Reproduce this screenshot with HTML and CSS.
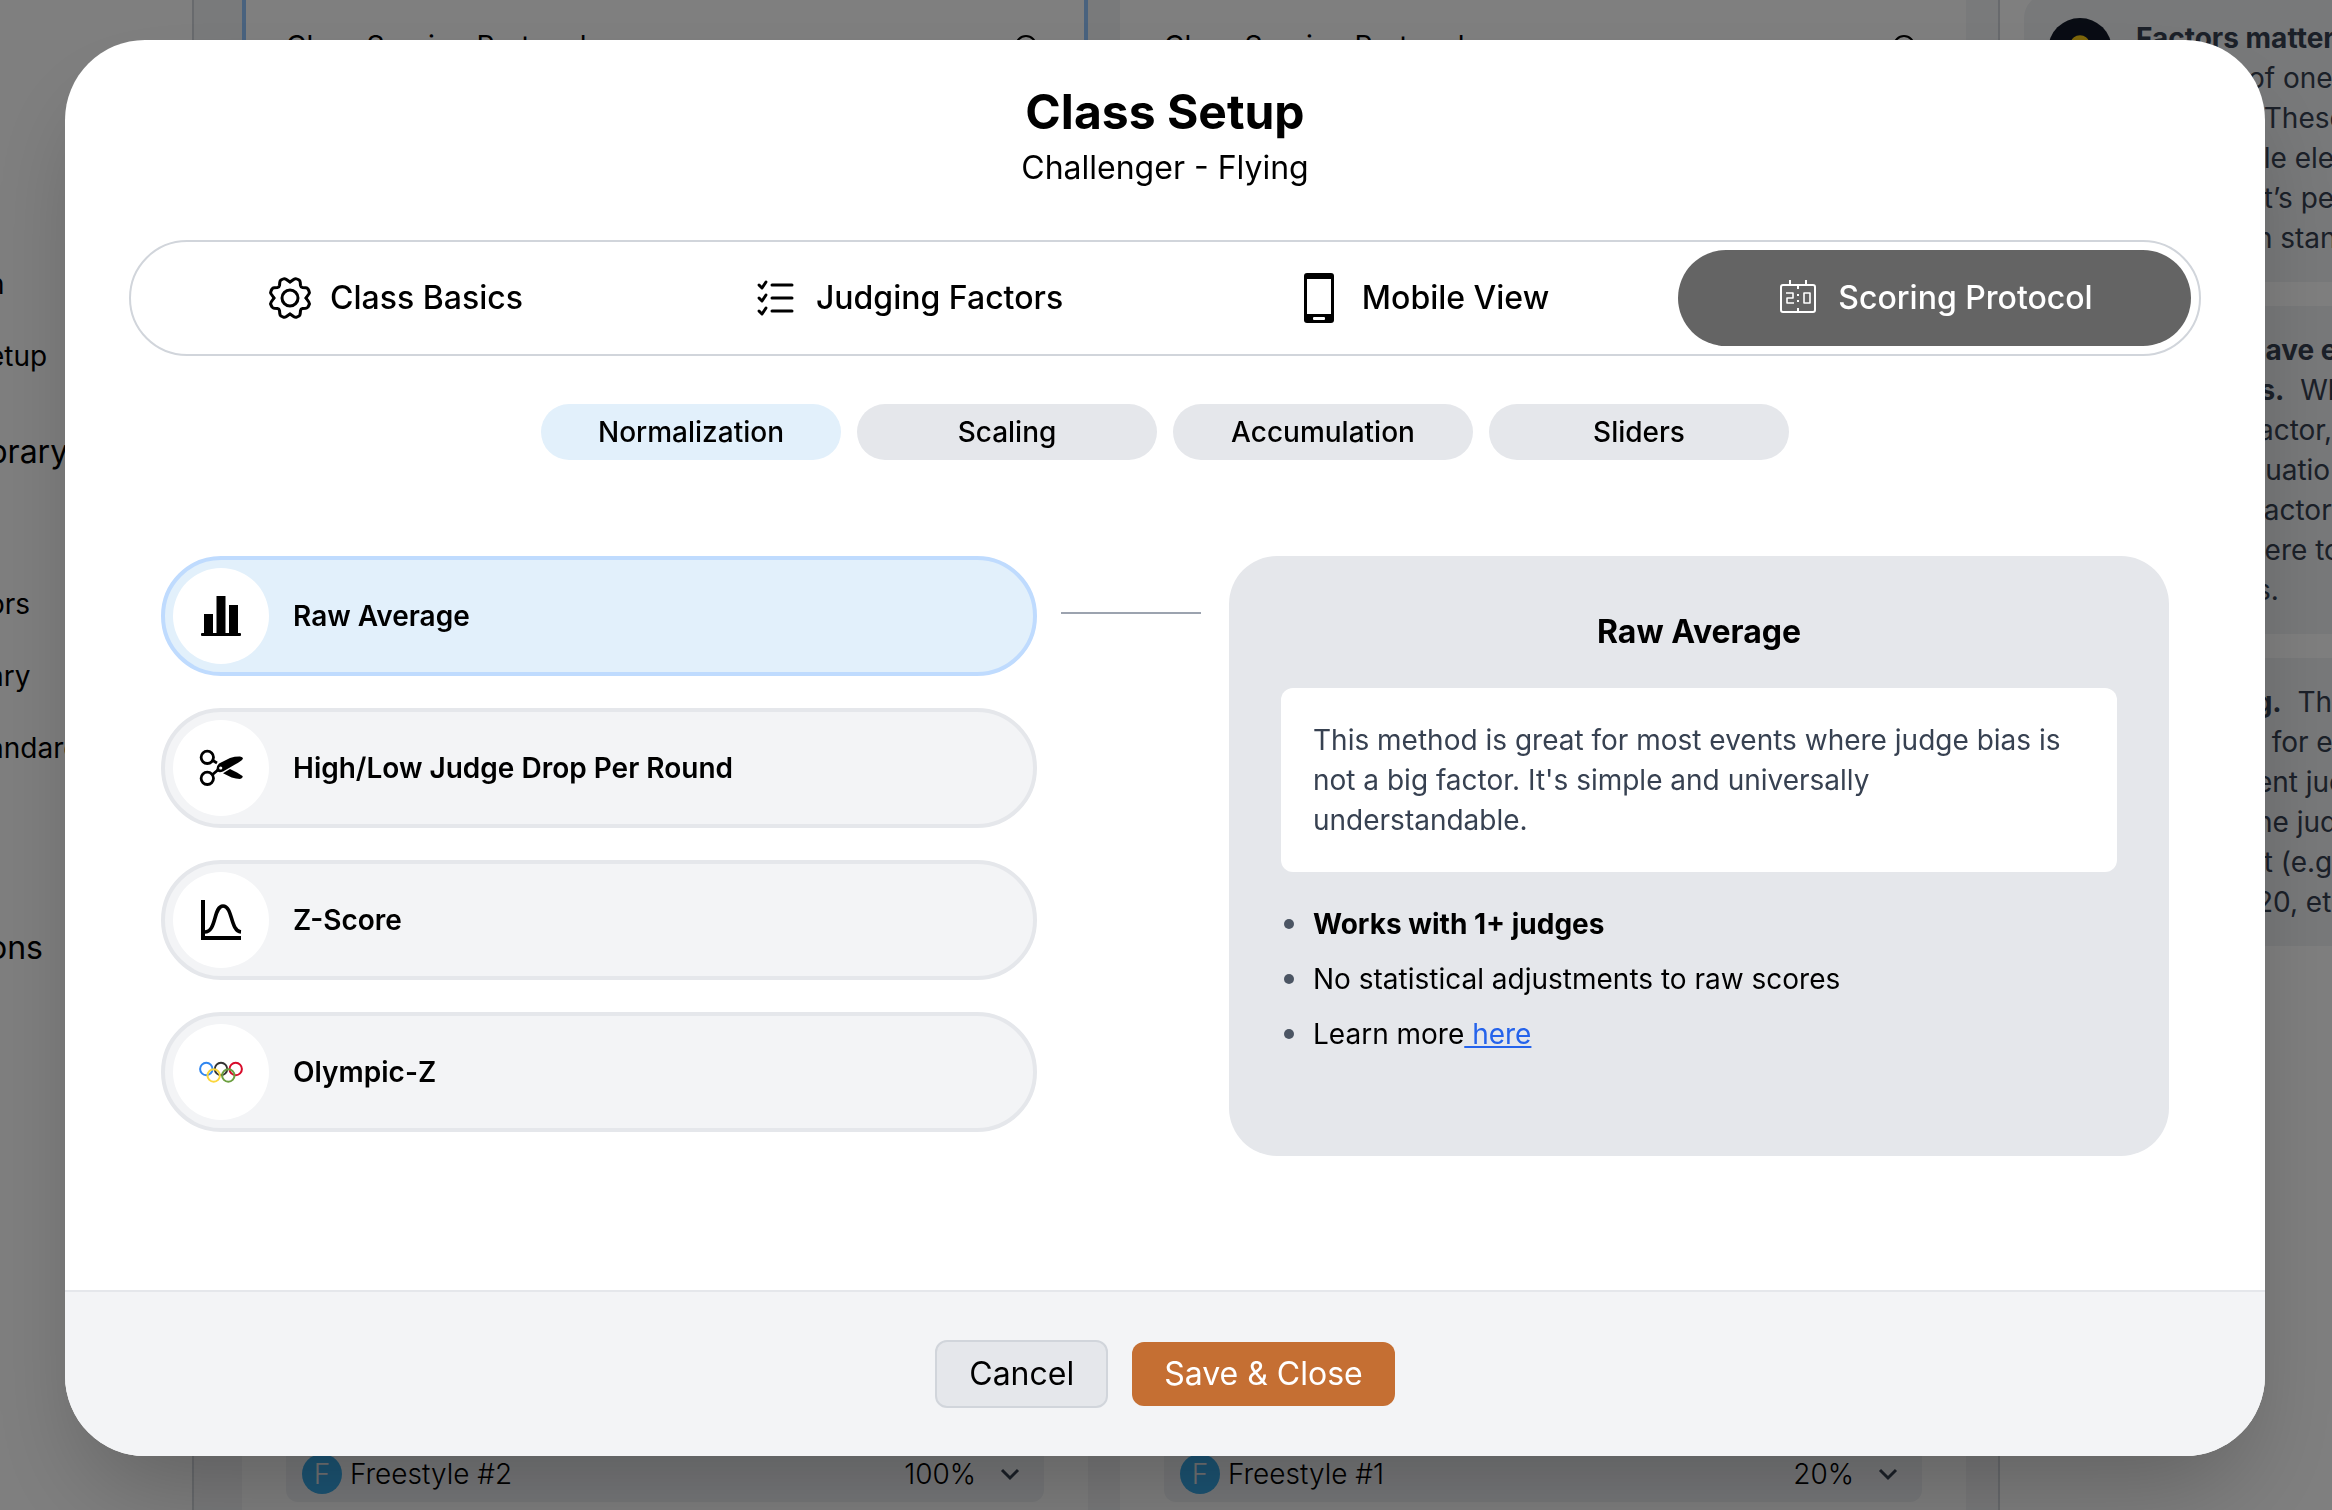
FILE: index.html
```html
<!DOCTYPE html>
<html lang="en">
<head>
  <meta charset="UTF-8">
  <meta name="viewport" content="width=device-width, initial-scale=1.0">
  <title>Class Setup</title>
  <link rel="stylesheet" href="styles.css">
</head>
<body>
  <!-- Page behind the dialog -->
  <div class="page" aria-hidden="true">
    <nav class="sidebar">
      <ul class="side-list">
        <li>n</li>
        <li>etup</li>
      </ul>
      <div class="side-heading">brary</div>
      <ul class="side-list">
        <li>ors</li>
        <li>ary</li>
        <li>andards</li>
      </ul>
      <div class="side-heading">ons</div>
    </nav>

    <main class="board">
      <section class="class-card selected">
        <div class="card-top">
          <span>Class Scoring Protocol</span>
          <svg class="info-icon" viewBox="0 0 24 24"><circle cx="12" cy="12" r="10" fill="none" stroke="#000" stroke-width="2" /></svg>
        </div>
        <div class="factor-row">
          <span class="badge">F</span>
          <span class="factor-name">Freestyle #2</span>
          <span>100%</span>
          <svg class="chevron" viewBox="0 0 24 24"><path d="M4 8l8 8 8-8" /></svg>
        </div>
      </section>
      <section class="class-card">
        <div class="card-top">
          <span>Class Scoring Protocol</span>
          <svg class="info-icon" viewBox="0 0 24 24"><circle cx="12" cy="12" r="10" fill="none" stroke="#000" stroke-width="2" /></svg>
        </div>
        <div class="factor-row">
          <span class="badge">F</span>
          <span class="factor-name">Freestyle #1</span>
          <span>20%</span>
          <svg class="chevron" viewBox="0 0 24 24"><path d="M4 8l8 8 8-8" /></svg>
        </div>
      </section>
    </main>

    <aside class="tips">
      <div class="tip">
        <span class="tip-icon">
          <svg viewBox="0 0 24 24"><path d="M12 1a8 8 0 0 0-5 14v3h10v-3a8 8 0 0 0-5-14zM8 20h8v3H8z" fill="#facc15" /></svg>
        </span>
        <div>
          <b>Factors matter</b>
          <div class="tip-lines">of one 
  These
  le ele
  t’s pe
 n stan</div>
        </div>
      </div>
      <div class="tip">
        <span class="tip-icon"></span>
        <div class="tip-lines"><b>have e
rs.</b>  Wh
factor,
quatio
  actor
here to
 s.</div>
      </div>
      <div class="tip">
        <span class="tip-icon"></span>
        <div class="tip-lines"><b> g.</b>  Th
   for e
 ent jud
 he jud
  t (e.g.
 20, etc</div>
      </div>
    </aside>
  </div>

  <!-- Dialog -->
  <div class="overlay">
    <div class="modal" role="dialog" aria-modal="true" aria-labelledby="modalTitle">
      <div class="modal-body">
        <header class="modal-header">
          <h1 id="modalTitle">Class Setup</h1>
          <p>Challenger - Flying</p>
        </header>

        <div class="tabs" role="tablist">
          <button class="tab" type="button" role="tab">
            <svg class="tab-icon" viewBox="-22 -22 44 44" fill="none" stroke="#000" stroke-width="3" stroke-linejoin="round" stroke-linecap="round">
              <path id="cog" d="M0-16L4-18.8Q5.5-19.8 7-19L9-18Q10-17.3 10.2-15.8L10.5-12.5Q10.8-10.8 12.5-10.5L15.8-10.2Q17.3-10 18-9L19-7Q19.8-5.5 18.8-4L16 0" />
              <use href="#cog" transform="rotate(90)" />
              <use href="#cog" transform="rotate(180)" />
              <use href="#cog" transform="rotate(270)" />
              <circle r="8" />
            </svg>
            Class Basics
          </button>
          <button class="tab" type="button" role="tab">
            <svg class="tab-icon" viewBox="0 0 44 44" fill="none" stroke="#000" stroke-width="3" stroke-linejoin="round" stroke-linecap="round">
              <path d="M18 9h20M18 22h20M18 35h20" />
              <path d="M5 9l3 3 4-6M5 22l3 3 4-6M5 35l3 3 4-6" />
            </svg>
            Judging Factors
          </button>
          <button class="tab" type="button" role="tab">
            <svg class="tab-icon tab-icon-lg" viewBox="0 0 50 50">
              <rect x="10" y="0" width="30" height="50" rx="3" fill="#000" />
              <rect x="13" y="6" width="24" height="35" fill="#fff" />
              <rect x="19" y="44" width="12" height="3" rx="1" fill="#fff" />
            </svg>
            Mobile View
          </button>
          <button class="tab active" type="button" role="tab" aria-selected="true">
            <svg class="tab-icon" viewBox="0 0 44 44" fill="none" stroke="#fff" stroke-width="2">
              <rect x="5" y="9" width="34" height="27" rx="2" />
              <path d="M14 4v5M30 4v5M22 9v4M22 32v4" />
              <path d="M10 17h7v5h-6v5h7M28 17h6v10h-6z" stroke-width="1.6" stroke-linejoin="round" />
              <path d="M22 18v2M22 24v2" />
            </svg>
            Scoring Protocol
          </button>
        </div>

        <div class="sub-tabs" role="tablist">
          <button class="pill active" type="button" role="tab" aria-selected="true">Normalization</button>
          <button class="pill" type="button" role="tab">Scaling</button>
          <button class="pill" type="button" role="tab">Accumulation</button>
          <button class="pill" type="button" role="tab">Sliders</button>
        </div>

        <div class="method">
          <div class="options">
            <button class="option active" type="button">
              <span class="option-icon">
                <svg viewBox="0 0 44 44">
                  <path d="M5 20h9v20H5zM17.500 2h9v38h-9zM30 11h9v29h-9z" />
                  <rect x="2" y="39" width="40" height="3" rx="1" />
                </svg>
              </span>
              Raw Average
            </button>
            <button class="option" type="button">
              <span class="option-icon">
                <svg viewBox="0 0 44 44">
                  <g fill="none" stroke="#000" stroke-width="2.8">
                    <circle cx="8.3" cy="11.3" r="6.2" />
                    <circle cx="8.3" cy="32.3" r="6.2" />
                    <path d="M13 14l5 3M13 29l7-6" />
                  </g>
                  <path d="M17.5 25Q17 20 20 17.5L31 12Q36 10.5 41 10.6Q44 11 44 12.7Q42 15.5 36 18.5L24 25.5Q20 27 17.5 25zM24 27.3L31 23L38 26.5L43.5 30Q44.5 32 41 33Q37 33 32.7 31.6z" />
                  <circle cx="21.7" cy="22" r="1.6" fill="#fff" />
                </svg>
              </span>
              High/Low Judge Drop Per Round
            </button>
            <button class="option" type="button">
              <span class="option-icon">
                <svg viewBox="0 0 44 44" fill="none" stroke="#000" stroke-width="4">
                  <path d="M4 2v38h38" />
                  <path d="M5 34C18 35 14 8 24 8S31 33 42 34" stroke-width="3.6" />
                </svg>
              </span>
              Z-Score
            </button>
            <button class="option" type="button">
              <span class="option-icon">
                <svg viewBox="0 0 44 44" fill="none" stroke-width="2">
                  <circle cx="7.3" cy="19" r="6.2" stroke="#2f86f0" />
                  <circle cx="22" cy="19" r="6.2" stroke="#333" />
                  <circle cx="36.7" cy="19" r="6.2" stroke="#d80b2a" />
                  <circle cx="14.7" cy="25.5" r="6.2" stroke="#fbd63c" />
                  <circle cx="29.3" cy="25.5" r="6.2" stroke="#6b9f3f" />
                </svg>
              </span>
              Olympic-Z
            </button>
          </div>

          <div class="connector"></div>

          <section class="detail">
            <h2>Raw Average</h2>
            <p class="detail-text">This method is great for most events where judge bias is not a big factor. It's simple and universally understandable.</p>
            <ul class="detail-list">
              <li><b>Works with 1+ judges</b></li>
              <li>No statistical adjustments to raw scores</li>
              <li>Learn more<a href="#"> here</a></li>
            </ul>
          </section>
        </div>
      </div>

      <footer class="modal-footer">
        <button class="btn btn-cancel" type="button">Cancel</button>
        <button class="btn btn-save" type="button">Save &amp; Close</button>
      </footer>
    </div>
  </div>
</body>
</html>
```

FILE: styles.css
```css
* {
  box-sizing: border-box;
}
html, body {
  margin: 0;
  padding: 0;
  height: 100%;
  overflow: hidden;
}
body {
  font-family: Inter, 'Liberation Sans', sans-serif;
  font-size: 28px;
  line-height: 40px;
  color: #000;
  background: #fff;
}
button {
  font: inherit;
  color: inherit;
  margin: 0;
  padding: 0;
  border: 0;
  cursor: pointer;
}
ul {
  list-style: none;
  margin: 0;
  padding: 0;
}

/* page behind */
.page {
  display: flex;
  height: 100vh;
  overflow: hidden;
}
.sidebar {
  flex: none;
  width: 194px;
  padding-top: 264px;
  border-right: 2px solid #d1d5db;
  overflow: hidden;
}
.side-list, .side-heading {
  margin-left: -12px;
}
.side-list {
  display: flex;
  flex-direction: column;
  gap: 32px;
}
.side-heading {
  font-size: 32px;
  padding: 56px 0;
}
.side-list + .side-heading:last-child {
  padding-top: 160px;
}
.side-heading + .side-list {
  padding-top: 56px;
}
.board {
  flex: 1;
  display: grid;
  grid-template-columns: 1fr 1fr;
  gap: 32px;
  padding: 0 32px 0 48px;
  background: #f3f4f6;
  border-right: 2px solid #d1d5db;
}
.class-card {
  display: flex;
  flex-direction: column;
  justify-content: space-between;
  padding-bottom: 8px;
  background: #fff;
}
.card-top {
  display: flex;
  justify-content: space-between;
  align-items: center;
  padding: 26px 46px 26px 40px;
  border: 4px solid #fff;
  border-width: 0 4px;
}
.selected .card-top {
  border-color: #93c5fd;
}
.info-icon {
  width: 24px;
  height: 24px;
}
.factor-row {
  display: flex;
  align-items: center;
  height: 56px;
  margin: 0 44px;
  padding: 0 22px 0 16px;
  border-radius: 12px;
  background: #f0f2f5;
  font-weight: 300;
}
.badge {
  width: 40px;
  height: 40px;
  margin-right: 8px;
  border-radius: 50%;
  background: #38a9e8;
  color: #e5e7eb;
  text-align: center;
}
.factor-name {
  flex: 1;
}
.chevron {
  width: 24px;
  height: 24px;
  margin-left: 22px;
  fill: none;
  stroke: #374151;
  stroke-width: 3;
}
.tips {
  flex: none;
  width: 332px;
  display: flex;
  flex-direction: column;
  gap: 24px;
  margin-top: -6px;
  padding-left: 24px;
  overflow: hidden;
}
.tip {
  display: flex;
  gap: 24px;
  padding: 24px;
  border-radius: 24px 0 0 24px;
  background: #f0f2f5;
  color: #374151;
  white-space: nowrap;
}
.tip-icon {
  flex: none;
  display: flex;
  align-items: center;
  justify-content: center;
  width: 64px;
  height: 64px;
  border-radius: 50%;
  background: #111827;
}
.tip-icon svg {
  width: 32px;
  height: 32px;
}
.tip-lines {
  padding-left: 112px;
  white-space: pre;
}

/* dialog */
.overlay {
  position: fixed;
  inset: 0;
  display: flex;
  padding: 40px 67px 54px 65px;
  background: rgba(0, 0, 0, 0.5);
}
.modal {
  flex: 1;
  display: flex;
  flex-direction: column;
  overflow: hidden;
  border-radius: 80px;
  background: #fff;
  box-shadow: 0 50px 100px -24px rgba(0, 0, 0, 0.25);
}
.modal-body {
  flex: 1;
  padding: 40px 64px 0;
}
.modal-header {
  text-align: center;
  margin-bottom: 48px;
}
.modal-header h1 {
  margin: 0;
  font-size: 48px;
  line-height: 64px;
  font-weight: 700;
}
.modal-header p {
  margin: 0;
  font-size: 32px;
  line-height: 48px;
}
.tabs {
  display: grid;
  grid-template-columns: repeat(4, 1fr);
  padding: 8px;
  border: 2px solid #d1d5db;
  border-radius: 58px;
}
.tab {
  display: flex;
  align-items: center;
  justify-content: center;
  gap: 18px;
  height: 96px;
  border-radius: 48px;
  background: transparent;
  font-size: 32px;
  font-weight: 500;
}
.tab.active {
  background: #646464;
  color: #fff;
}
.tab-icon {
  width: 44px;
  height: 44px;
}
.tab-icon-lg {
  width: 50px;
  height: 50px;
}
.sub-tabs {
  display: flex;
  justify-content: center;
  gap: 16px;
  margin: 48px 0 96px;
}
.pill {
  width: 300px;
  height: 56px;
  border-radius: 28px;
  background: #e5e7eb;
  font-weight: 500;
}
.pill.active {
  background: #e2f0fb;
}
.method {
  display: grid;
  grid-template-columns: 219fr 48fr 235fr;
  align-items: start;
  padding: 0 32px;
}
.options {
  display: flex;
  flex-direction: column;
  gap: 32px;
}
.option {
  display: flex;
  align-items: center;
  gap: 24px;
  padding: 8px;
  border: 4px solid #e5e7eb;
  border-radius: 60px;
  background: #f3f4f6;
  font-weight: 600;
  text-align: left;
}
.option.active {
  border-color: #bfdbfe;
  background: #e2f0fb;
}
.option-icon {
  display: flex;
  align-items: center;
  justify-content: center;
  width: 96px;
  height: 96px;
  border-radius: 50%;
  background: #fff;
}
.option-icon svg {
  width: 44px;
  height: 44px;
}
.connector {
  height: 2px;
  margin: 56px 28px 0 24px;
  background: #9ca3af;
}
.detail {
  min-height: 600px;
  padding: 52px;
  border-radius: 48px;
  background: #e5e7eb;
}
.detail h2 {
  margin: 0 0 32px;
  font-size: 32px;
  line-height: 48px;
  font-weight: 700;
  text-align: center;
}
.detail-text {
  margin: 0 0 32px;
  padding: 32px;
  border-radius: 12px;
  background: #fff;
  color: #374151;
}
.detail-list {
  display: flex;
  flex-direction: column;
  gap: 15px;
}
.detail-list li {
  display: flex;
  align-items: center;
  white-space: pre;
}
.detail-list li::before {
  content: "";
  width: 10px;
  height: 10px;
  margin: 0 19px 0 3px;
  border-radius: 50%;
  background: #4b5563;
}
.detail-list a {
  color: #2563eb;
  text-decoration: underline;
}
.modal-footer {
  display: flex;
  align-items: center;
  justify-content: center;
  gap: 24px;
  padding: 48px;
  border-top: 2px solid #e5e7eb;
  background: #f3f4f6;
}
.btn {
  padding: 8px 32px;
  border-radius: 12px;
  font-size: 32px;
  line-height: 48px;
}
.btn-cancel {
  border: 2px solid #d1d5db;
  background: #e5e7eb;
}
.btn-save {
  background: #c56f33;
  color: #fff;
}
```
